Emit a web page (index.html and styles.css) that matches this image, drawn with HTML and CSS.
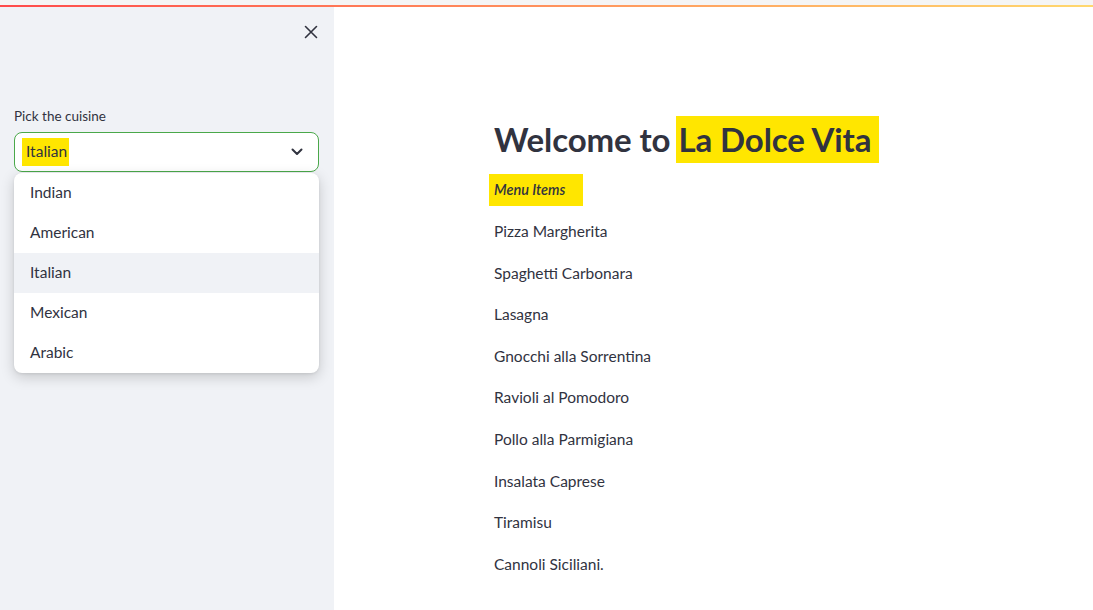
FILE: index.html
```html
<!DOCTYPE html>
<html lang="en">
<head>
<meta charset="utf-8">
<title>La Dolce Vita</title>
<link rel="stylesheet" href="styles.css">
</head>
<body>
<div class="chrome"></div>
<div class="decoration"></div>
<div class="app">
  <aside class="sidebar">
    <div class="sidebar-top">
      <button class="close-btn" aria-label="Close sidebar">
        <svg width="14" height="14" viewBox="0 0 14 14"><path d="M1.5 1.5 L12.5 12.5 M12.5 1.5 L1.5 12.5" stroke="#31333f" stroke-width="1.6" stroke-linecap="round"/></svg>
      </button>
    </div>
    <div class="widget">
      <label class="widget-label">Pick the cuisine</label>
      <div class="select">
        <span class="select-value"><span class="hl hl-small">Italian</span></span>
        <svg class="chevron" width="12" height="8" viewBox="0 0 12 8"><path d="M1.5 1.5 L6 6 L10.5 1.5" fill="none" stroke="#31333f" stroke-width="2" stroke-linecap="round" stroke-linejoin="round"/></svg>
      </div>
      <ul class="dropdown">
        <li class="option">Indian</li>
        <li class="option">American</li>
        <li class="option active">Italian</li>
        <li class="option">Mexican</li>
        <li class="option">Arabic</li>
      </ul>
    </div>
  </aside>
  <main class="main">
    <div class="block">
      <h1 class="title">Welcome to <span class="hl hl-title">La Dolce Vita</span></h1>
      <p class="subtitle"><span class="hl hl-sub"><em>Menu Items</em></span></p>
      <p class="item">Pizza Margherita</p>
      <p class="item">Spaghetti Carbonara</p>
      <p class="item">Lasagna</p>
      <p class="item">Gnocchi alla Sorrentina</p>
      <p class="item">Ravioli al Pomodoro</p>
      <p class="item">Pollo alla Parmigiana</p>
      <p class="item">Insalata Caprese</p>
      <p class="item">Tiramisu</p>
      <p class="item">Cannoli Siciliani.</p>
    </div>
  </main>
</div>
</body>
</html>
```

FILE: styles.css
```css
* { box-sizing: border-box; }
html, body {
  margin: 0;
  padding: 0;
  height: 100%;
  overflow: hidden;
}
body {
  font-family: Lato, "Liberation Sans", sans-serif;
  color: #31333f;
  background: #ffffff;
  display: flex;
  flex-direction: column;
}
.chrome {
  height: 5px;
  background: #f5f5f5;
  flex: none;
}
.decoration {
  height: 2px;
  flex: none;
  background: linear-gradient(90deg, #ff4b4b, #ffd86e);
}
.app {
  flex: 1;
  display: flex;
  min-height: 0;
}
.sidebar {
  width: 334px;
  flex: none;
  background: #f0f2f6;
  padding: 0 15px 0 14px;
}
.sidebar-top {
  display: flex;
  justify-content: flex-end;
  padding-top: 18px;
  height: 99px;
}
.close-btn {
  border: 0;
  background: transparent;
  padding: 0;
  width: 14px;
  height: 14px;
  margin-right: 1px;
  display: flex;
}
.widget { position: relative; }
.widget-label {
  display: block;
  font-size: 13.5px;
  line-height: 20px;
  margin-bottom: 6px;
}
.select {
  height: 40px;
  background: #ffffff;
  border: 1px solid #4aa84a;
  border-radius: 8px;
  display: flex;
  align-items: center;
  justify-content: space-between;
  padding: 0 15px 0 7px;
  font-size: 15.5px;
}
.chevron { display: block; }
.hl {
  background: #ffe600;
}
.hl-small {
  display: inline-block;
  padding: 3px 2px 4px 4px;
  line-height: 21px;
}
.dropdown {
  position: absolute;
  left: 0;
  right: 0;
  top: 67px;
  margin: 0;
  padding: 0;
  list-style: none;
  background: #ffffff;
  border-radius: 8px;
  box-shadow: 0 4px 14px rgba(0, 0, 0, 0.18), 0 1px 3px rgba(0, 0, 0, 0.08);
  overflow: hidden;
}
.option {
  height: 40px;
  line-height: 38px;
  padding-left: 16px;
  font-size: 15.5px;
  color: #31333f;
}
.option.active { background: #f0f2f6; }
.main {
  flex: 1;
  padding: 111px 0 0 160px;
}
.title {
  margin: 0 0 14px;
  font-size: 33px;
  font-weight: 700;
  line-height: 42px;
  letter-spacing: -0.1px;
}
.hl-title {
  padding: 3px 8px 4px 2px;
  margin-left: -2px;
}
.subtitle {
  margin: 0 0 13px;
  font-size: 14.5px;
  font-weight: 600;
  line-height: 24px;
}
.hl-sub {
  display: inline-block;
  padding: 4px 18px 4px 5px;
  margin-left: -5px;
}
.item {
  margin: 0 0 16px;
  font-size: 15.5px;
  line-height: 25.6px;
}
```
